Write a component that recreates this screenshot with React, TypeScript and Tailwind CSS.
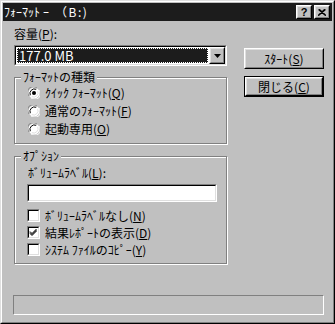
import React from "react"

const ui = "font-['Noto_Sans_CJK_JP',sans-serif] text-[12px] leading-[14px] text-black"

function U({ children }: { children: React.ReactNode }) {
    return <span className="underline underline-offset-[1px]">{children}</span>
}

function Raised({ className = "", children }: { className?: string, children?: React.ReactNode }) {
    return (
        <div className={`border border-t-white border-l-white border-r-black border-b-black bg-[#c0c0c0] ${className}`}>
            <div className="w-full h-full border border-t-[#dfdfdf] border-l-[#dfdfdf] border-r-[#808080] border-b-[#808080] flex items-center justify-center">
                {children}
            </div>
        </div>
    )
}

function Sunken({ className = "", children }: { className?: string, children?: React.ReactNode }) {
    return (
        <div className={`border border-t-[#808080] border-l-[#808080] border-r-white border-b-white ${className}`}>
            <div className="w-full h-full border border-t-black border-l-black border-r-[#dfdfdf] border-b-[#dfdfdf] bg-white flex">
                {children}
            </div>
        </div>
    )
}

function Radio({ checked }: { checked?: boolean }) {
    return (
        <svg width="12" height="12" viewBox="0 0 12 12" className="shrink-0">
            <circle cx="6" cy="6" r="5.5" fill="white" />
            <path d="M1.2 9 A5.5 5.5 0 0 1 9 1.2" fill="none" stroke="#808080" strokeWidth="1" />
            <path d="M2.3 8.2 A4.5 4.5 0 0 1 8.2 2.3" fill="none" stroke="#000" strokeWidth="1" />
            <path d="M10.8 3 A5.5 5.5 0 0 1 3 10.8" fill="none" stroke="#fff" strokeWidth="1" />
            <path d="M9.7 3.8 A4.5 4.5 0 0 1 3.8 9.7" fill="none" stroke="#dfdfdf" strokeWidth="1" />
            {checked && <circle cx="6" cy="6" r="2" fill="black" />}
        </svg>
    )
}

function Check({ checked }: { checked?: boolean }) {
    return (
        <div className="w-[13px] h-[13px] shrink-0 border border-t-[#808080] border-l-[#808080] border-r-white border-b-white">
            <div className="w-full h-full border border-t-black border-l-black border-r-[#dfdfdf] border-b-[#dfdfdf] bg-white">
                {checked && (
                    <svg width="9" height="9" viewBox="0 0 9 9">
                        <path d="M1 3.5 L3 5.5 L7.5 1 M1 4.5 L3 6.5 L7.5 2 M1 5.5 L3 7.5 L7.5 3" stroke="black" strokeWidth="1" fill="none" />
                    </svg>
                )}
            </div>
        </div>
    )
}

function Group({ label, className = "", children }: { label: string, className?: string, children: React.ReactNode }) {
    return (
        <div className={`relative border border-[#808080] shadow-[inset_1px_1px_0_#fff,1px_1px_0_#fff] ${className}`}>
            <span className="absolute -top-[8px] left-[6px] bg-[#c0c0c0] px-[2px]">{label}</span>
            {children}
        </div>
    )
}

export default function App() {
    return (
        <div className={`w-[335px] h-[324px] bg-[#c0c0c0] border border-t-[#dfdfdf] border-l-[#dfdfdf] border-r-black border-b-black ${ui}`}>
            <div className="w-full h-full border border-t-white border-l-white border-r-[#808080] border-b-[#808080] p-px flex flex-col">
                {/* Title bar */}
                <div className="h-[18px] bg-[#1c1c1c] flex items-center pl-px pr-[2px] text-white">
                    <span>ﾌｫｰﾏｯﾄ</span>
                    <span className="ml-[3px]">ｰ</span>
                    <span className="ml-[6px] tracking-[1.5px]">（B:)</span>
                    <div className="ml-auto flex gap-[2px] text-black">
                        <Raised className="w-[16px] h-[14px]">
                            <span className="font-['Liberation_Sans',sans-serif] font-bold text-[11px] leading-none">?</span>
                        </Raised>
                        <Raised className="w-[16px] h-[14px]">
                            <svg width="8" height="7" viewBox="0 0 8 7">
                                <path d="M0.5 0.5 L7.5 6.5 M7.5 0.5 L0.5 6.5 M1.5 0.5 L8 6.5 M6.5 0.5 L0 6.5" stroke="black" strokeWidth="1.1" />
                            </svg>
                        </Raised>
                    </div>
                </div>

                {/* Body */}
                <div className="flex pl-[11px] pt-[6px]">
                    <div className="w-[213px] flex flex-col">
                        <div className="h-[14px]">容量(<U>P</U>):</div>
                        <Sunken className="mt-[4px] h-[21px]">
                            <div className="flex-1 m-px bg-[#1c1c1c] border border-dotted border-white text-white text-[13px] pl-px leading-[13px]">177.0 MB</div>
                            <Raised className="w-[16px] h-[17px]">
                                <svg width="7" height="4" viewBox="0 0 7 4"><path d="M0 0 H7 L3.5 4 Z" fill="black" /></svg>
                            </Raised>
                        </Sunken>

                        <Group label="ﾌｫｰﾏｯﾄの種類" className="mt-[11px] pt-[6px] pb-[5px] pl-[13px]">
                            <div className="h-[18px] flex items-center gap-[5px]"><Radio checked /><span>ｸｲｯｸ ﾌｫｰﾏｯﾄ(<U>Q</U>)</span></div>
                            <div className="h-[18px] flex items-center gap-[5px]"><Radio /><span>通常のﾌｫｰﾏｯﾄ(<U>F</U>)</span></div>
                            <div className="h-[18px] flex items-center gap-[5px]"><Radio /><span>起動専用(<U>O</U>)</span></div>
                        </Group>

                        <Group label="ｵﾌﾟｼｮﾝ" className="mt-[12px] pt-[9px] pb-[5px] pl-[12px] pr-[9px]">
                            <div className="h-[14px] pl-px">ﾎﾞﾘｭｰﾑﾗﾍﾞﾙ(<U>L</U>):</div>
                            <Sunken className="mt-[4px] h-[18px]" />
                            <div className="mt-[5px] flex flex-col">
                                <div className="h-[17px] flex items-center gap-[5px]"><Check /><span>ﾎﾞﾘｭｰﾑﾗﾍﾞﾙなし(<U>N</U>)</span></div>
                                <div className="h-[17px] flex items-center gap-[5px]"><Check checked /><span>結果ﾚﾎﾟｰﾄの表示(<U>D</U>)</span></div>
                                <div className="h-[17px] flex items-center gap-[5px]"><Check /><span>ｼｽﾃﾑ ﾌｧｲﾙのｺﾋﾟｰ(<U>Y</U>)</span></div>
                            </div>
                        </Group>
                    </div>

                    <div className="ml-[17px] w-[80px] flex flex-col pt-[21px]">
                        <Raised className="h-[21px]"><span>ｽﾀｰﾄ(<U>S</U>)</span></Raised>
                        <div className="mt-[7px] h-[21px] border border-black">
                            <Raised className="h-full"><span>閉じる(<U>C</U>)</span></Raised>
                        </div>
                    </div>
                </div>

                {/* Status bar */}
                <div className="mt-[31px] ml-[10px] w-[311px] h-[20px] border border-t-[#808080] border-l-[#808080] border-r-white border-b-white" />
            </div>
        </div>
    )
}
